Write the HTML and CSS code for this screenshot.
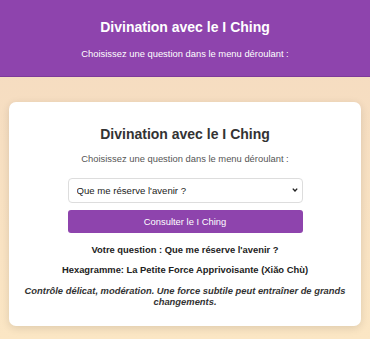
FILE: index.html
```html
<!DOCTYPE html>
<html lang="fr">
<head>
<meta charset="utf-8">
<title>Divination avec le I Ching</title>
<link rel="stylesheet" href="styles.css">
</head>
<body>
<header class="site-header">
  <h1 class="site-title">Divination avec le I Ching</h1>
  <p class="site-subtitle">Choisissez une question dans le menu déroulant :</p>
</header>
<main class="card">
  <h2 class="card-title">Divination avec le I Ching</h2>
  <p class="card-subtitle">Choisissez une question dans le menu déroulant :</p>
  <form class="form">
    <div class="select-wrap">
      <select class="question-select">
        <option>Que me réserve l'avenir ?</option>
      </select>
      <svg class="select-chevron" width="6" height="4" viewBox="0 0 6 4" aria-hidden="true"><path d="M0.8 0.6 L3 3 L5.2 0.6" fill="none" stroke="#222" stroke-width="1.4"/></svg>
    </div>
    <button type="button" class="consult-btn">Consulter le I Ching</button>
  </form>
  <p class="result-question">Votre question : Que me réserve l'avenir ?</p>
  <p class="result-hexagram">Hexagramme: La Petite Force Apprivoisante (Xiăo Chù)</p>
  <p class="result-text">Contrôle délicat, modération. Une force subtile peut entraîner de grands changements.</p>
</main>
</body>
</html>
```
FILE: styles.css
```css
html, body {
  margin: 0;
  padding: 0;
}
body {
  font-family: "Liberation Sans", Arial, sans-serif;
  background: linear-gradient(to bottom, #f4dac0 0%, #fbe6c4 100%);
  min-height: 339px;
  color: #333;
}
.site-header {
  background: #8e44ad;
  color: #fff;
  text-align: center;
  height: 77px;
  box-sizing: border-box;
  padding-top: 18px;
  border-bottom: 1px solid #7d3a9a;
}
.site-title {
  margin: 0;
  font-size: 14px;
  font-weight: bold;
  line-height: 18px;
}
.site-subtitle {
  margin: 12px 0 0;
  font-size: 9.4px;
  line-height: 12px;
}
.card {
  display: block;
  width: 352px;
  margin: 25px auto 0;
  background: #fff;
  border-radius: 7px;
  box-shadow: 0 2px 8px rgba(0,0,0,0.12);
  box-sizing: border-box;
  padding: 23px 15px 19px;
  text-align: center;
}
.card-title {
  margin: 0;
  font-size: 14px;
  font-weight: bold;
  line-height: 18px;
  color: #333;
}
.card-subtitle {
  margin: 10px 0 0;
  font-size: 9.4px;
  line-height: 12px;
  color: #555;
}
.form {
  display: flex;
  flex-direction: column;
  align-items: center;
  gap: 7px;
  margin-top: 13px;
}
.select-wrap {
  position: relative;
  width: 235px;
  height: 25px;
}
.question-select {
  -webkit-appearance: none;
  appearance: none;
  display: block;
  width: 100%;
  height: 100%;
  box-sizing: border-box;
  font-family: "Liberation Sans", Arial, sans-serif;
  font-size: 9.6px;
  color: #222;
  background: #fff;
  border: 1px solid #ddd;
  border-radius: 4px;
  padding: 0 4px 0 8px;
  text-align: left;
}
.select-chevron {
  position: absolute;
  right: 5px;
  top: 10px;
  pointer-events: none;
}
.consult-btn {
  width: 235px;
  height: 23px;
  background: #8e44ad;
  color: #fff;
  border: none;
  border-radius: 3px;
  font-family: "Liberation Sans", Arial, sans-serif;
  font-size: 9.4px;
}
.result-question,
.result-hexagram {
  margin: 0;
  font-size: 9.4px;
  font-weight: bold;
  line-height: 12px;
  color: #222;
}
.result-question {
  margin-top: 11px;
}
.result-hexagram {
  margin-top: 8px;
}
.result-text {
  margin: 9px 0 0;
  font-size: 9.4px;
  font-weight: bold;
  font-style: italic;
  line-height: 11px;
  color: #333;
}
```
